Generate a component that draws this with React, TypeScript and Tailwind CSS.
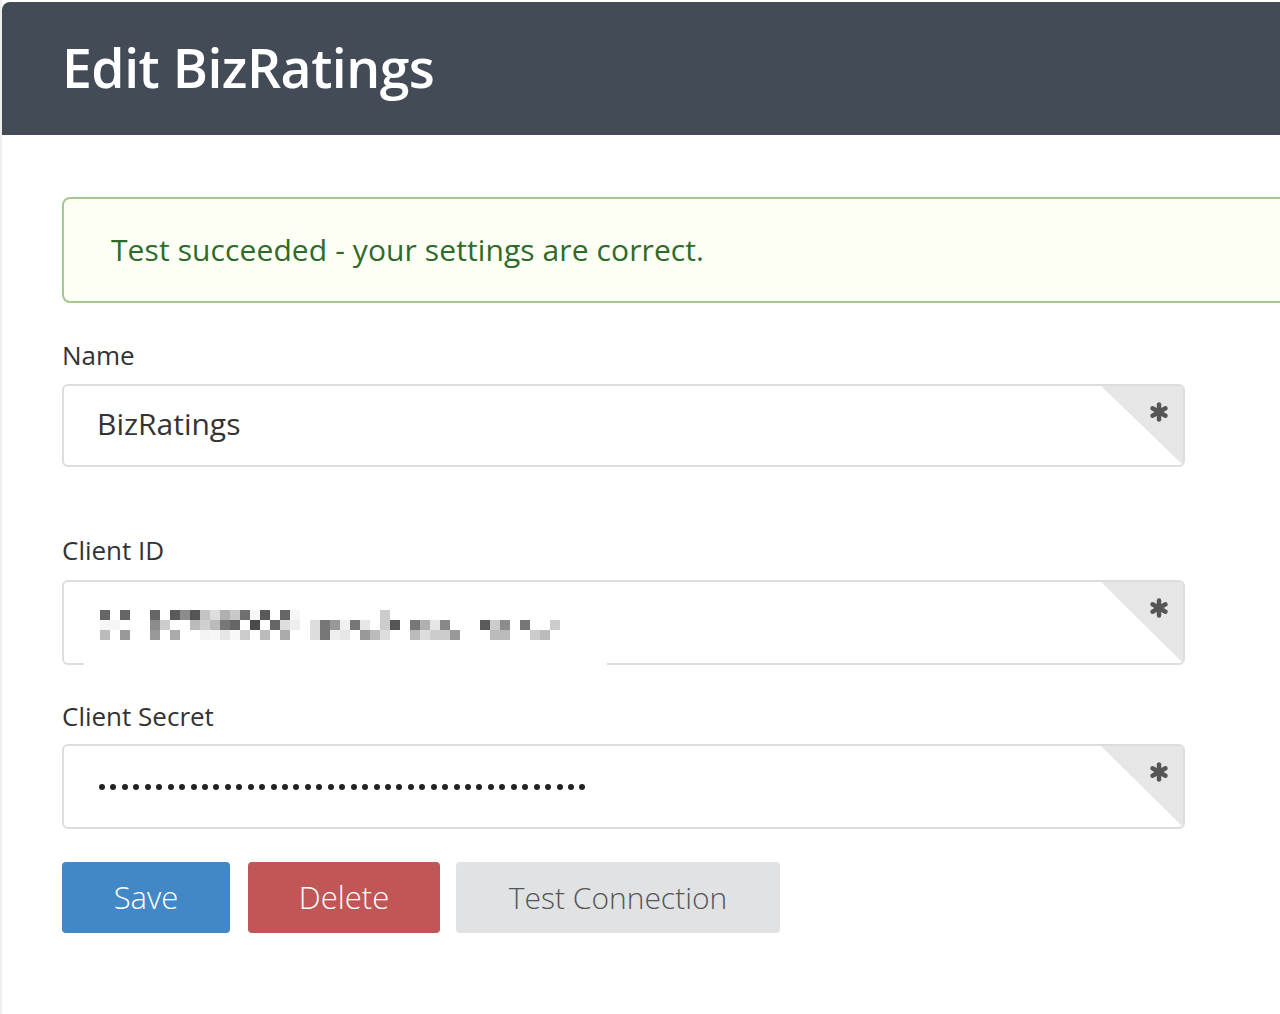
import React from 'react';

const font = { fontFamily: '"Open Sans", "Liberation Sans", sans-serif' };

// blurred client id: [row, col, colour]
const blur: [number, number, string][] = [
  [0, 0, '#666'], [0, 2, '#666'], [0, 5, '#666'], [0, 7, '#5a5a5a'], [0, 8, '#8c8c8c'], [0, 9, '#555'],
  [0, 10, '#c4c4c4'], [0, 11, '#ddd'], [0, 12, '#b0b0b0'], [0, 13, '#c8c8c8'], [0, 14, '#707070'],
  [0, 15, '#f6f6f6'], [0, 16, '#5a5a5a'], [0, 18, '#666'], [0, 19, '#f6f6f6'], [0, 28, '#ccc'],
  [1, 0, '#f6f6f6'], [1, 1, '#f6f6f6'], [1, 5, '#8c8c8c'], [1, 6, '#ccc'], [1, 9, '#bbb'], [1, 10, '#d0d0d0'],
  [1, 11, '#bbb'], [1, 12, '#777'], [1, 13, '#666'], [1, 15, '#4a4a4a'], [1, 17, '#666'], [1, 18, '#ddd'],
  [1, 19, '#eee'], [1, 21, '#ddd'], [1, 22, '#777'], [1, 23, '#999'], [1, 24, '#f0f0f0'], [1, 25, '#777'],
  [1, 26, '#e6e6e6'], [1, 28, '#ccc'], [1, 29, '#555'], [1, 31, '#777'], [1, 32, '#b0b0b0'], [1, 33, '#e6e6e6'],
  [1, 34, '#888'], [1, 38, '#5a5a5a'], [1, 39, '#ccc'], [1, 40, '#8c8c8c'], [1, 42, '#777'], [1, 45, '#ccc'],
  [2, 0, '#bbb'], [2, 2, '#999'], [2, 5, '#999'], [2, 7, '#aaa'], [2, 10, '#f4f4f4'], [2, 11, '#f6f6f6'],
  [2, 12, '#e6e6e6'], [2, 13, '#f8f8f8'], [2, 14, '#ccc'], [2, 16, '#bbb'], [2, 18, '#aaa'], [2, 21, '#ddd'],
  [2, 22, '#777'], [2, 23, '#eee'], [2, 24, '#e6e6e6'], [2, 26, '#999'], [2, 27, '#bbb'], [2, 28, '#ddd'],
  [2, 31, '#bbb'], [2, 32, '#ddd'], [2, 33, '#ccc'], [2, 34, '#ccc'], [2, 35, '#999'], [2, 39, '#bbb'],
  [2, 40, '#bbb'], [2, 43, '#ccc'], [2, 44, '#bbb'],
];

function Asterisk() {
  return (
    <svg width="20" height="20" viewBox="0 0 20 20" className="absolute top-[16px] right-[14px]">
      <g stroke="#555" strokeWidth="4.5" strokeLinecap="round">
        <line x1="10" y1="2.5" x2="10" y2="17.5" />
        <line x1="3.5" y1="6.25" x2="16.5" y2="13.75" />
        <line x1="3.5" y1="13.75" x2="16.5" y2="6.25" />
      </g>
    </svg>
  );
}

function Field({ h, children, gap }: { h: string; children: React.ReactNode; gap?: boolean }) {
  return (
    <div className="relative w-[1123px]">
      <div className={`relative ${h} border-2 border-[#dddddd] rounded-[6px] bg-white overflow-hidden flex items-center pl-[33px]`}>
        {children}
        <div
          className="absolute top-0 right-0 w-[82px] h-full bg-[#e6e6e6]"
          style={{ clipPath: 'polygon(0 0, 100% 0, 100% 100%)' }}
        />
        <Asterisk />
      </div>
      {gap && <div className="absolute bottom-[-1px] left-[22px] w-[523px] h-[4px] bg-white" />}
    </div>
  );
}

export default function App() {
  return (
    <div className="w-[1280px] h-[1014px] bg-white flex overflow-hidden" style={font}>
      <div className="w-[2px] h-full bg-[#efefef] shrink-0" />
      <div className="flex-1 flex flex-col pt-[2px]">
        <div className="h-[133px] bg-[#424b56] rounded-tl-[8px] flex items-center pl-[60px]">
          <h1 className="text-white text-[53.5px] font-semibold tracking-[-0.5px] leading-none pb-[2px]">Edit BizRatings</h1>
        </div>

        <div className="pl-[60px] pt-[62px] flex flex-col">
          <div className="w-[1240px] h-[106px] border-2 border-[#a3c891] rounded-[8px] bg-[#fdfff5] flex items-center pl-[47px]">
            <p className="text-[#2e6b2b] text-[30px] leading-none tracking-[0.1px]">Test succeeded - your settings are correct.</p>
          </div>

          <label className="mt-[37px] text-[#333] text-[26px] leading-[30px]">Name</label>
          <div className="mt-[14px]">
            <Field h="h-[83px]">
              <span className="text-[#333] text-[30px] leading-none pb-[4px]">BizRatings</span>
            </Field>
          </div>

          <label className="mt-[68px] text-[#333] text-[26px] leading-[30px]">Client ID</label>
          <div className="mt-[15px]">
            <Field h="h-[85px]" gap>
              <svg width="460" height="30" className="mt-[4px] ml-[3px]">
                {blur.map(([r, c, col], i) => (
                  <rect key={i} x={c * 10} y={r * 10} width="10" height="10" fill={col} />
                ))}
              </svg>
            </Field>
          </div>

          <label className="mt-[36px] text-[#333] text-[26px] leading-[30px]">Client Secret</label>
          <div className="mt-[13px]">
            <Field h="h-[85px]">
              <div className="flex gap-[5.45px] ml-[2px]">
                {Array.from({ length: 43 }).map((_, i) => (
                  <span key={i} className="w-[6px] h-[6px] rounded-full bg-[#222] shrink-0" />
                ))}
              </div>
            </Field>
          </div>

          <div className="mt-[33px] flex">
            <button className="w-[168px] h-[71px] bg-[#4288c7] rounded-[4px] text-white text-[31px] font-light">Save</button>
            <button className="ml-[18px] w-[192px] h-[71px] bg-[#c05655] rounded-[4px] text-white text-[31px] font-light">Delete</button>
            <button className="ml-[16px] w-[324px] h-[71px] bg-[#e1e2e4] rounded-[4px] text-[#555] text-[30px] font-light">Test Connection</button>
          </div>
        </div>
      </div>
    </div>
  );
}
